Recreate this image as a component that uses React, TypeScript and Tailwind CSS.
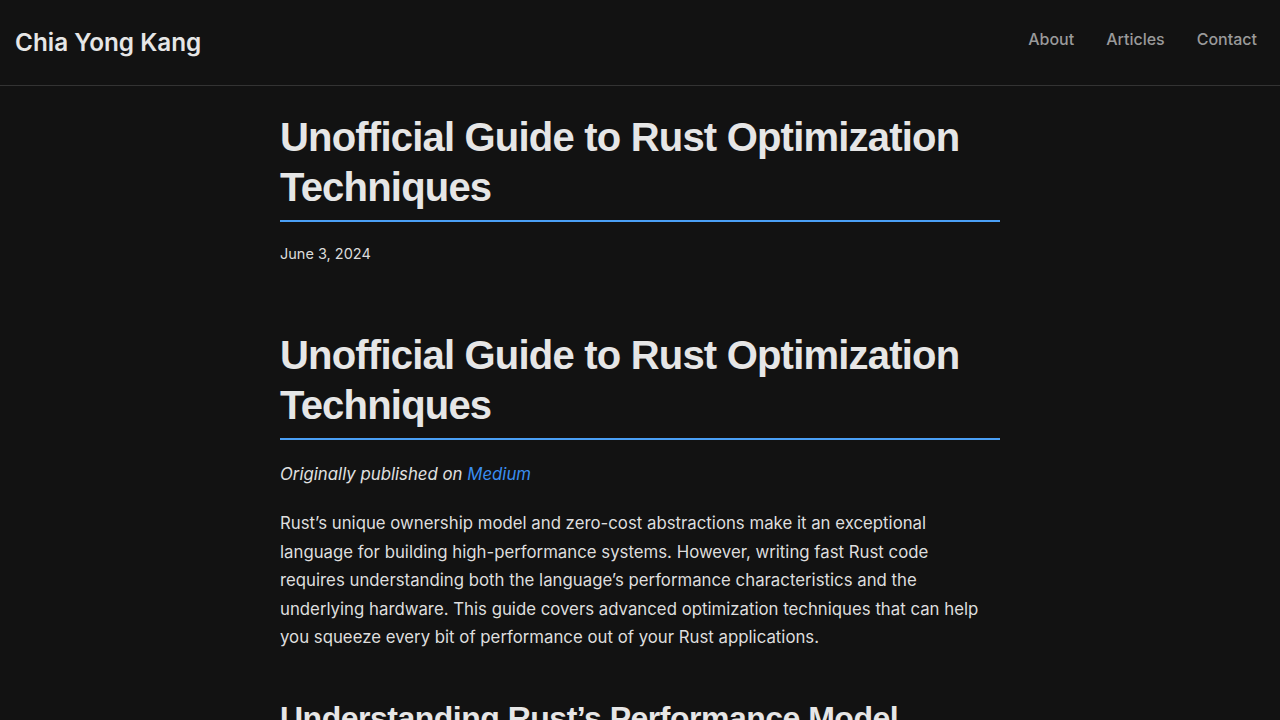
const inter = 'font-["Inter","Noto_Sans",sans-serif]'

function Header() {
  return (
    <header className="flex items-center justify-between h-[86px] border-b border-[#333333] pl-[15px] pr-[23px]">
      <a className="text-[24.3px] font-semibold text-[#e6e6e6]">Chia Yong Kang</a>
      <nav className="flex gap-[32px] text-[16px] font-medium text-[#9a9a9a] -mt-[8px]">
        <a>About</a>
        <a>Articles</a>
        <a>Contact</a>
      </nav>
    </header>
  )
}

function Title({ children }: { children: React.ReactNode }) {
  return (
    <h1 className='font-["Liberation_Sans",Arial,sans-serif] font-bold text-[40px] leading-[50px] tracking-[-0.8px] text-[#e6e6e6] pb-[8px] border-b-2 border-[#4a9ff5]'>
      {children}
    </h1>
  )
}

export default function App() {
  return (
    <div className={`min-h-screen bg-[#121212] text-[#e0e0e0] ${inter}`}>
      <Header />
      <main className="w-[720px] mx-auto pt-[26px]">
        <Title>Unofficial Guide to Rust Optimization Techniques</Title>
        <p className="mt-[22px] text-[14.5px] leading-[20px] text-[#dcdcdc]">June 3, 2024</p>

        <article className="mt-[66px]">
          <Title>Unofficial Guide to Rust Optimization Techniques</Title>
          <p className="mt-[20px] text-[16.8px] leading-[28px] italic">
            Originally published on <a className="text-[#3a8ef0]">Medium</a>
          </p>
          <p className="mt-[21px] pr-[20px] text-[16.8px] leading-[28.5px] text-[#dedede]">
            Rust’s unique ownership model and zero-cost abstractions make it an exceptional language for building
            high-performance systems. However, writing fast Rust code requires understanding both the language’s
            performance characteristics and the underlying hardware. This guide covers advanced optimization techniques
            that can help you squeeze every bit of performance out of your Rust applications.
          </p>
          <h2 className='mt-[46px] font-["Liberation_Sans",Arial,sans-serif] font-bold text-[32px] leading-[40px] tracking-[-0.5px] text-[#e6e6e6]'>
            Understanding Rust’s Performance Model
          </h2>
          <p className="mt-[20px] pr-[20px] text-[16.8px] leading-[28.5px] text-[#dedede]">
            Before diving into specific optimizations, it’s important to understand how Rust compiles and executes code.
          </p>
        </article>
      </main>
    </div>
  )
}
